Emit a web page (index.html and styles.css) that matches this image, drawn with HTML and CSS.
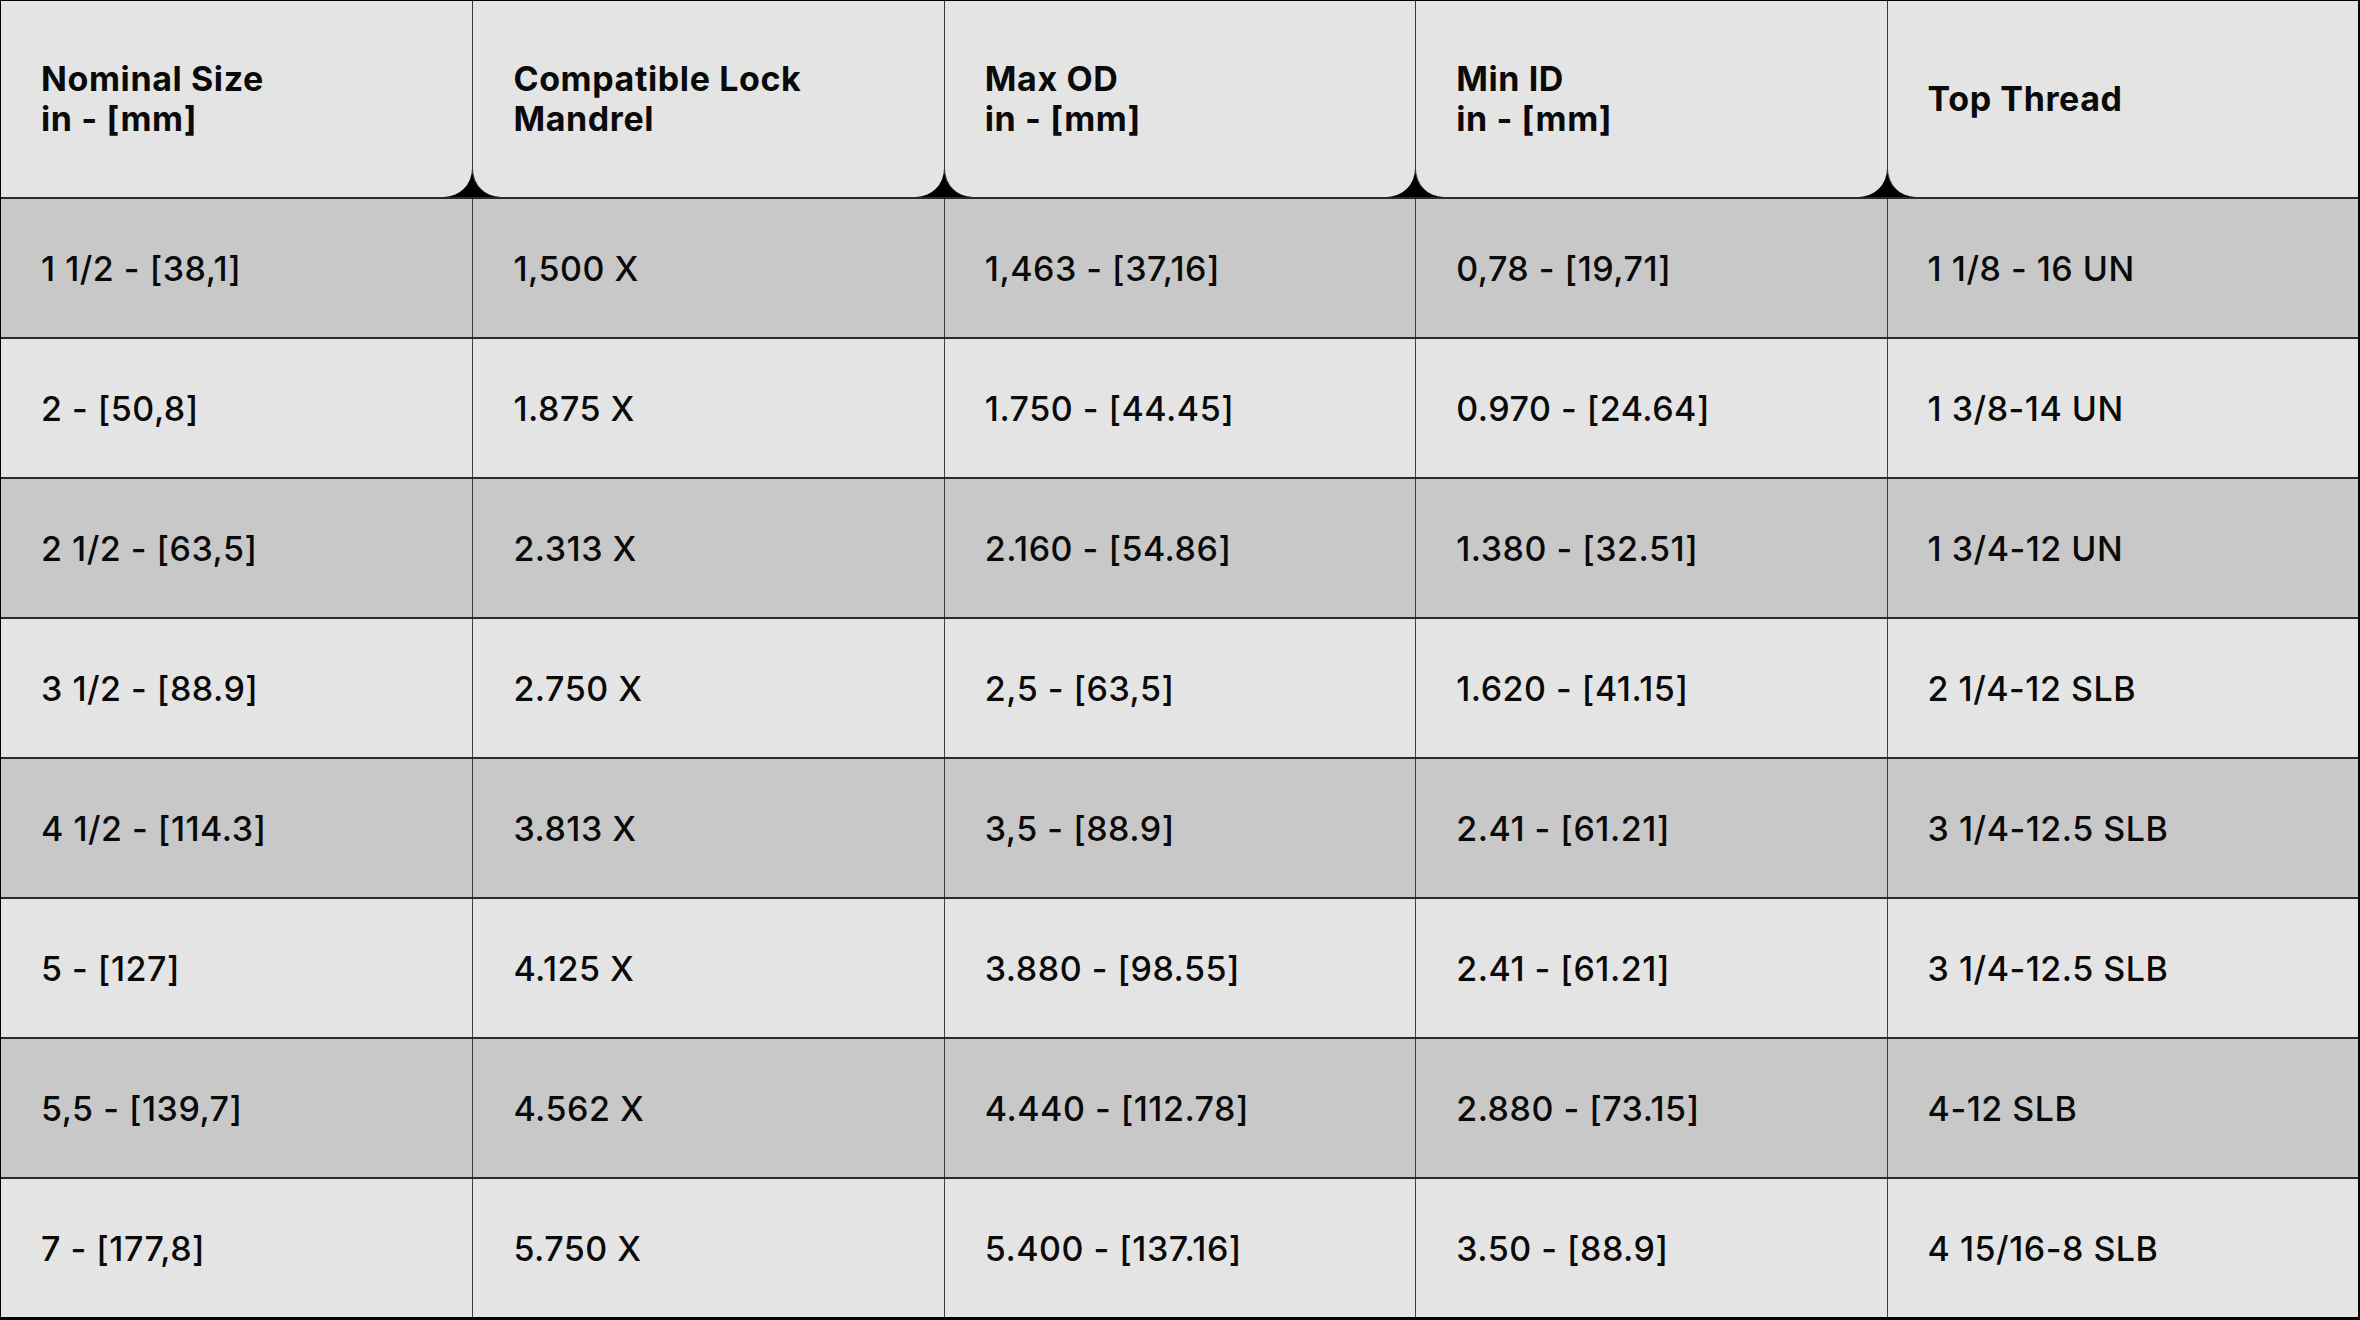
FILE: index.html
```html
<!DOCTYPE html>
<html lang="en">
<head>
<meta charset="utf-8">
<title>Lock Mandrel Specifications</title>
<link rel="stylesheet" href="styles.css">
</head>
<body>
<div class="sheet">
  <div class="row head">
    <div class="cell">Nominal Size<br>in - [mm]</div>
    <div class="cell">Compatible Lock<br>Mandrel</div>
    <div class="cell">Max OD<br>in - [mm]</div>
    <div class="cell">Min ID<br>in - [mm]</div>
    <div class="cell">Top Thread</div>
  </div>
  <div class="row dark">
    <div class="cell">1 1/2 - [38,1]</div>
    <div class="cell">1,500 X</div>
    <div class="cell">1,463 - [37,16]</div>
    <div class="cell">0,78 - [19,71]</div>
    <div class="cell">1 1/8 - 16 UN</div>
  </div>
  <div class="row light">
    <div class="cell">2 - [50,8]</div>
    <div class="cell">1.875 X</div>
    <div class="cell">1.750 - [44.45]</div>
    <div class="cell">0.970 - [24.64]</div>
    <div class="cell">1 3/8-14 UN</div>
  </div>
  <div class="row dark">
    <div class="cell">2 1/2 - [63,5]</div>
    <div class="cell">2.313 X</div>
    <div class="cell">2.160 - [54.86]</div>
    <div class="cell">1.380 - [32.51]</div>
    <div class="cell">1 3/4-12 UN</div>
  </div>
  <div class="row light">
    <div class="cell">3 1/2 - [88.9]</div>
    <div class="cell">2.750 X</div>
    <div class="cell">2,5 - [63,5]</div>
    <div class="cell">1.620 - [41.15]</div>
    <div class="cell">2 1/4-12 SLB</div>
  </div>
  <div class="row dark">
    <div class="cell">4 1/2 - [114.3]</div>
    <div class="cell">3.813 X</div>
    <div class="cell">3,5 - [88.9]</div>
    <div class="cell">2.41 - [61.21]</div>
    <div class="cell">3 1/4-12.5 SLB</div>
  </div>
  <div class="row light">
    <div class="cell">5 - [127]</div>
    <div class="cell">4.125 X</div>
    <div class="cell">3.880 - [98.55]</div>
    <div class="cell">2.41 - [61.21]</div>
    <div class="cell">3 1/4-12.5 SLB</div>
  </div>
  <div class="row dark">
    <div class="cell">5,5 - [139,7]</div>
    <div class="cell">4.562 X</div>
    <div class="cell">4.440 - [112.78]</div>
    <div class="cell">2.880 - [73.15]</div>
    <div class="cell">4-12 SLB</div>
  </div>
  <div class="row light">
    <div class="cell">7 - [177,8]</div>
    <div class="cell">5.750 X</div>
    <div class="cell">5.400 - [137.16]</div>
    <div class="cell">3.50 - [88.9]</div>
    <div class="cell">4 15/16-8 SLB</div>
  </div>
</div>
</body>
</html>
```
FILE: styles.css
```css
html, body {
  margin: 0;
  padding: 0;
  background: #e4e4e4;
}

body {
  font-family: Inter, "Noto Sans", "Liberation Sans", sans-serif;
  color: #0a0a0a;
}

.sheet {
  width: 2360px;
  height: 1320px;
  box-sizing: border-box;
  border: 1px solid #000;
  border-right-width: 2px;
  border-bottom-width: 2px;
  background: #000;
  display: flex;
  flex-direction: column;
}

.row {
  display: grid;
  grid-template-columns: repeat(5, 1fr);
}

.cell {
  box-sizing: border-box;
  display: flex;
  align-items: center;
  padding-left: 40px;
}

.cell + .cell {
  border-left: 1px solid #3c3c3c;
}

.head {
  height: 196px;
  background: #000;
}

.head .cell {
  background: #e4e4e4;
  font-size: 34px;
  line-height: 40px;
  font-weight: 700;
  letter-spacing: 0.6px;
}

.head .cell:not(:last-child) {
  border-bottom-right-radius: 28px;
}

.head .cell:not(:first-child) {
  border-bottom-left-radius: 28px;
}

.dark,
.light {
  height: 140px;
  box-sizing: border-box;
  border-top: 2px solid #2a2a2a;
  font-size: 34px;
  font-weight: 500;
  letter-spacing: 0.5px;
}

.dark {
  background: #c8c8c8;
}

.light {
  background: #e4e4e4;
}
```
